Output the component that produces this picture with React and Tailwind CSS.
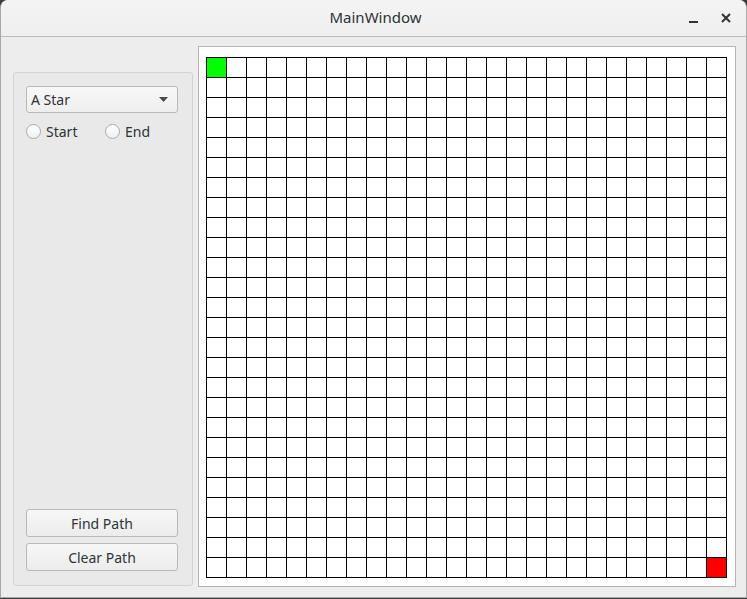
import React from "react";

const SIZE = 26;

const Radio = ({ label }) => (
  <label className="flex items-center gap-[5px]">
    <span className="w-[15px] h-[15px] rounded-full border border-[#a9a9a9] bg-gradient-to-b from-white to-[#f0f0f0]"></span>
    <span>{label}</span>
  </label>
);

const Button = ({ children }) => (
  <button className="w-[152px] h-[28px] rounded-[3px] border border-[#b9b9b9] bg-gradient-to-b from-[#f7f7f7] to-[#ececec] text-[14px] text-[#2e3436]">
    {children}
  </button>
);

export default function App() {
  const cells = [];
  for (let r = 0; r < SIZE; r++) {
    for (let c = 0; c < SIZE; c++) {
      let color = "bg-white";
      if (r === 0 && c === 0) color = "bg-[#00ff00]";
      if (r === SIZE - 1 && c === SIZE - 1) color = "bg-[#ff0000]";
      cells.push(
        <div key={r + "-" + c} className={"w-[20px] h-[20px] border-r border-b border-black " + color}></div>
      );
    }
  }

  return (
    <div
      className="w-[747px] h-[599px] bg-[#3c3f41] overflow-hidden"
      style={{ fontFamily: '"Noto Sans", "Open Sans", sans-serif' }}
    >
      <div className="w-[747px] h-[598px] flex flex-col rounded-t-[8px] border-x border-b border-[#a8a8a8] bg-[#ededed] overflow-hidden">
        {/* title bar */}
        <div className="h-[37px] shrink-0 flex items-center relative bg-gradient-to-b from-[#f4f4f4] to-[#efefef] border-b border-[#bdbdbd]">
          <div className="flex-1 text-center text-[15px] text-[#2e3436] pb-[1px] pl-[4px]">MainWindow</div>
          <div className="absolute right-[14px] top-0 h-[36px] flex items-center gap-[20px] text-[#2e3436]">
            <svg width="12" height="12" viewBox="0 0 12 12">
              <rect x="1" y="9" width="9" height="2" fill="#2e3436" />
            </svg>
            <svg width="12" height="12" viewBox="0 0 12 12">
              <path d="M2 2 L10 10 M10 2 L2 10" stroke="#2e3436" strokeWidth="2" />
            </svg>
          </div>
        </div>

        {/* body */}
        <div className="flex pt-[9px] pl-[12px]">
          {/* controls group */}
          <div className="mt-[26px] w-[180px] h-[514px] rounded-[3px] border border-[#d3d3d3] bg-[#e9e9e9] flex flex-col px-[12px] pt-[13px] pb-[14px] text-[14px] text-[#2e3436]">
            <div className="w-[152px] h-[27px] rounded-[3px] border border-[#b9b9b9] bg-gradient-to-b from-[#f8f8f8] to-[#eeeeee] flex items-center justify-between pl-[4px] pr-[9px]">
              <span>A Star</span>
              <svg width="9" height="5" viewBox="0 0 9 5">
                <path d="M0 0 L9 0 L4.5 5 Z" fill="#4a4a4a" />
              </svg>
            </div>
            <div className="flex items-center mt-[8px] h-[20px]">
              <div className="w-[79px]">
                <Radio label="Start" />
              </div>
              <Radio label="End" />
            </div>
            <div className="flex-1"></div>
            <div className="flex flex-col gap-[6px]">
              <Button>Find Path</Button>
              <Button>Clear Path</Button>
            </div>
          </div>

          {/* graphics view */}
          <div className="ml-[5px] w-[538px] h-[541px] border border-[#b4b4b4] bg-white pl-[7px] pt-[10px]">
            <div className="w-[521px] border-l border-t border-black grid grid-cols-[repeat(26,20px)]">
              {cells}
            </div>
          </div>
        </div>
      </div>
    </div>
  );
}
